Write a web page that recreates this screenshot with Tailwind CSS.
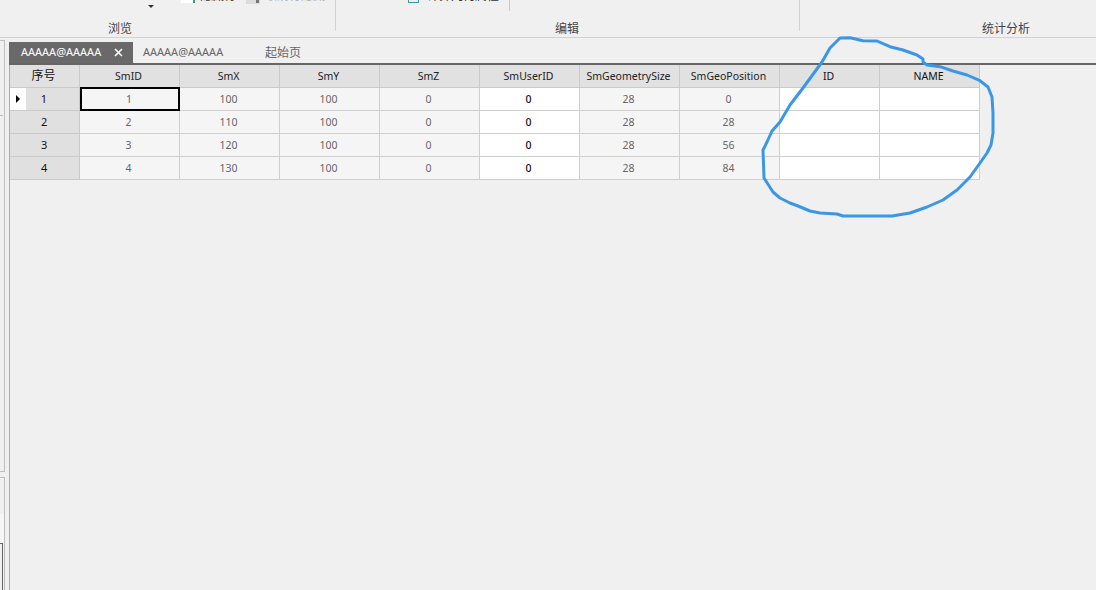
<!DOCTYPE html>
<html lang="en">
  <head>
    <meta charset="UTF-8" />
    <title>属性表</title>
    <script src="https://cdn.jsdelivr.net/npm/@tailwindcss/browser@4"></script>
  </head>
  <body class="relative w-[1096px] h-[590px] overflow-hidden bg-[#f0f0f0] font-['Noto_Sans','Noto_Sans_CJK_SC',sans-serif] text-[10.5px] text-[#444]">
    <!-- ribbon, its top is cut off by the window -->
    <div class="flex h-[38px] border-b border-[#d2d2d2] overflow-hidden">
      <div class="relative w-[336px] h-[31px] border-r border-[#d2d2d2] shrink-0">
        <span class="absolute left-[148px] top-[5px] w-0 h-0 border-x-[3px] border-x-transparent border-t-[3px] border-t-[#333]"></span>
        <span class="absolute left-[181px] -top-[10px] w-[14px] h-[13px] bg-white border-r-2 border-[#3a9a80]"></span>
        <span class="absolute left-[200px] -top-[13px] text-[#333] text-[12px]">隐藏行</span>
        <span class="absolute left-[246px] -top-[10px] w-[14px] h-[14px] bg-[#dcdcdc]"></span>
        <span class="absolute left-[256px] -top-[10px] w-[3px] h-[13px] bg-[#777]"></span>
        <span class="absolute left-[265px] -top-[13px] text-[#aaa] text-[12px]">取消行隐藏</span>
        <div class="absolute left-0 top-[21px] w-[240px] text-center text-[12px] leading-[16px]">浏览</div>
      </div>
      <div class="relative w-[464px] h-[31px] border-r border-[#d2d2d2] shrink-0">
        <span class="absolute left-[72px] -top-[8px] w-[11px] h-[11px] border border-[#3a9a9a]"></span>
        <span class="absolute left-[91px] -top-[13px] text-[12px] text-[#333]">计算几何属性</span>
        <span class="absolute left-[173px] top-0 h-[11px] border-r border-[#c8c8c8]"></span>
        <div class="absolute left-[219px] top-[21px] text-[12px] leading-[16px]">编辑</div>
      </div>
      <div class="relative grow">
        <div class="absolute left-[182px] top-[21px] text-[12px] leading-[16px]">统计分析</div>
      </div>
    </div>

    <div class="flex h-[552px]">
      <!-- collapsed panels on the left -->
      <div class="flex flex-col w-[9px] shrink-0">
        <div class="h-[432px] w-[5px] mt-[2px] border-t border-r border-b border-[#bdbdbd]">
          <div class="w-[3px] h-px mt-[74px] bg-[#bdbdbd]"></div>
        </div>
        <div class="flex flex-col grow w-[5px] mt-[5px] border-t border-r border-[#bdbdbd]">
          <div class="h-[36px]"></div>
          <div class="h-[29px] bg-[#f6f6f6]"></div>
          <div class="grow w-[3px] border-t border-r border-[#666]"></div>
        </div>
      </div>

      <div class="grow flex flex-col">
        <!-- tabs -->
        <div class="flex h-[27px] pt-[4px] border-b-[2px] border-[#666] text-[11px] shrink-0">
          <div class="flex items-center w-[124px] h-[21px] pl-[12px] bg-[#696969] text-white">
            <span>AAAAA@AAAAA</span>
            <svg class="ml-[13px]" width="9" height="9" viewBox="0 0 9 9"><path d="M1 1 L8 8 M8 1 L1 8" stroke="#fff" stroke-width="1.6" /></svg>
          </div>
          <div class="flex items-center w-[132px] h-[21px] pl-[10px] text-[#666]">AAAAA@AAAAA</div>
          <div class="flex items-center h-[21px] text-[12px] text-[#666]">起始页</div>
        </div>

        <!-- attribute table -->
        <div class="grow border-l border-[#aaa]">
          <div class="grid grid-cols-[70px_repeat(9,100px)] grid-rows-[23px_23px_23px_23px_23px] w-[970px] text-center leading-[22px] *:pr-[2px]">
            <div class="bg-[#e1e1e1] border-r border-b border-[#cacaca] text-[#111] text-[12px]">序号</div>
            <div class="bg-[#e1e1e1] border-r border-b border-[#cacaca] text-[#222]">SmID</div>
            <div class="bg-[#e1e1e1] border-r border-b border-[#cacaca] text-[#222]">SmX</div>
            <div class="bg-[#e1e1e1] border-r border-b border-[#cacaca] text-[#222]">SmY</div>
            <div class="bg-[#e1e1e1] border-r border-b border-[#cacaca] text-[#222]">SmZ</div>
            <div class="bg-[#e1e1e1] border-r border-b border-[#cacaca] text-[#222]">SmUserID</div>
            <div class="bg-[#e1e1e1] border-r border-b border-[#cacaca] text-[#222]">SmGeometrySize</div>
            <div class="bg-[#e1e1e1] border-r border-b border-[#cacaca] text-[#222]">SmGeoPosition</div>
            <div class="bg-[#e1e1e1] border-r border-b border-[#cacaca] text-[#111]">ID</div>
            <div class="bg-[#e1e1e1] border-r border-b border-[#cacaca] text-[#111]">NAME</div>

            <div class="flex bg-[#e0e0e0] border-r border-b border-[#cacaca] text-[#111] text-[11px]">
              <span class="flex items-center justify-center w-[16px] bg-white"><span class="w-0 h-0 border-y-[4px] border-y-transparent border-l-[4px] border-l-black"></span></span>
              <span class="w-[36px]">1</span>
            </div>
            <div class="bg-[#f5f5f5] border-2 -mt-px border-black text-[#666] leading-[20px]">1</div>
            <div class="bg-[#f5f5f5] border-r border-b border-[#cfcfcf] text-[#666]">100</div>
            <div class="bg-[#f5f5f5] border-r border-b border-[#cfcfcf] text-[#666]">100</div>
            <div class="bg-[#f5f5f5] border-r border-b border-[#cfcfcf] text-[#666]">0</div>
            <div class="bg-white border-r border-b border-[#cfcfcf] text-[#111] font-medium">0</div>
            <div class="bg-[#f5f5f5] border-r border-b border-[#cfcfcf] text-[#666]">28</div>
            <div class="bg-[#f5f5f5] border-r border-b border-[#cfcfcf] text-[#666]">0</div>
            <div class="bg-white border-r border-b border-[#cfcfcf]"></div>
            <div class="bg-white border-r border-b border-[#cfcfcf]"></div>

            <div class="bg-[#e0e0e0] border-r border-b border-[#cacaca] text-[#111] text-[11px] text-left pl-[31px]">2</div>
            <div class="bg-[#f5f5f5] border-r border-b border-[#cfcfcf] text-[#666]">2</div>
            <div class="bg-[#f5f5f5] border-r border-b border-[#cfcfcf] text-[#666]">110</div>
            <div class="bg-[#f5f5f5] border-r border-b border-[#cfcfcf] text-[#666]">100</div>
            <div class="bg-[#f5f5f5] border-r border-b border-[#cfcfcf] text-[#666]">0</div>
            <div class="bg-white border-r border-b border-[#cfcfcf] text-[#111] font-medium">0</div>
            <div class="bg-[#f5f5f5] border-r border-b border-[#cfcfcf] text-[#666]">28</div>
            <div class="bg-[#f5f5f5] border-r border-b border-[#cfcfcf] text-[#666]">28</div>
            <div class="bg-white border-r border-b border-[#cfcfcf]"></div>
            <div class="bg-white border-r border-b border-[#cfcfcf]"></div>

            <div class="bg-[#e0e0e0] border-r border-b border-[#cacaca] text-[#111] text-[11px] text-left pl-[31px]">3</div>
            <div class="bg-[#f5f5f5] border-r border-b border-[#cfcfcf] text-[#666]">3</div>
            <div class="bg-[#f5f5f5] border-r border-b border-[#cfcfcf] text-[#666]">120</div>
            <div class="bg-[#f5f5f5] border-r border-b border-[#cfcfcf] text-[#666]">100</div>
            <div class="bg-[#f5f5f5] border-r border-b border-[#cfcfcf] text-[#666]">0</div>
            <div class="bg-white border-r border-b border-[#cfcfcf] text-[#111] font-medium">0</div>
            <div class="bg-[#f5f5f5] border-r border-b border-[#cfcfcf] text-[#666]">28</div>
            <div class="bg-[#f5f5f5] border-r border-b border-[#cfcfcf] text-[#666]">56</div>
            <div class="bg-white border-r border-b border-[#cfcfcf]"></div>
            <div class="bg-white border-r border-b border-[#cfcfcf]"></div>

            <div class="bg-[#e0e0e0] border-r border-b border-[#cacaca] text-[#111] text-[11px] text-left pl-[31px]">4</div>
            <div class="bg-[#f5f5f5] border-r border-b border-[#cfcfcf] text-[#666]">4</div>
            <div class="bg-[#f5f5f5] border-r border-b border-[#cfcfcf] text-[#666]">130</div>
            <div class="bg-[#f5f5f5] border-r border-b border-[#cfcfcf] text-[#666]">100</div>
            <div class="bg-[#f5f5f5] border-r border-b border-[#cfcfcf] text-[#666]">0</div>
            <div class="bg-white border-r border-b border-[#cfcfcf] text-[#111] font-medium">0</div>
            <div class="bg-[#f5f5f5] border-r border-b border-[#cfcfcf] text-[#666]">28</div>
            <div class="bg-[#f5f5f5] border-r border-b border-[#cfcfcf] text-[#666]">84</div>
            <div class="bg-white border-r border-b border-[#cfcfcf]"></div>
            <div class="bg-white border-r border-b border-[#cfcfcf]"></div>
          </div>
        </div>
      </div>
    </div>

    <!-- hand drawn annotation over the table -->
    <svg class="absolute left-0 top-0 pointer-events-none" width="1096" height="590" viewBox="0 0 1096 590">
      <path fill="none" stroke="#3b97e6" stroke-width="3" stroke-linejoin="round" stroke-linecap="round"
        d="M840 38 L850 37.7 L863 40.7 L877 41 L890 46.7 L903 50 L917 55 L923 59 L923 62 L927 65 L940 66.7 L953 71 L967 75 L980 80.7 L988 87 L992 97 L993 113 L993 133 L991 145 L987 153 L980 163 L970 177 L957 190 L943 200 L927 207 L910 213 L892 216 L867 216 L843 216 L837 214 L820 213 L810 211 L798 206 L790 203 L780 198 L773 192 L764 178 L763 150 L767 142 L772 131 L780 122 L790 105 L803 88 L822 62 L830 48 Z" />
    </svg>
  </body>
</html>
